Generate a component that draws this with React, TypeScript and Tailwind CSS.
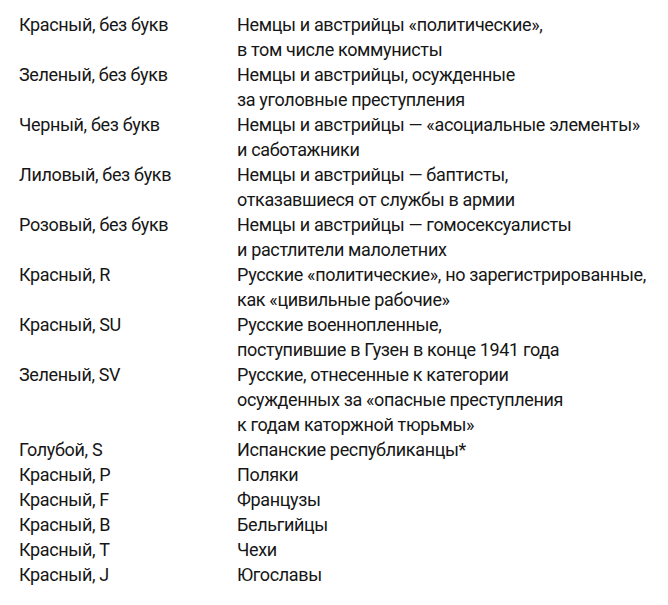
import React from "react";

const rows: [string, string[]][] = [
  ["Красный, без букв", ["Немцы и австрийцы «политические»,", "в том числе коммунисты"]],
  ["Зеленый, без букв", ["Немцы и австрийцы, осужденные", "за уголовные преступления"]],
  ["Черный, без букв", ["Немцы и австрийцы — «асоциальные элементы»", "и саботажники"]],
  ["Лиловый, без букв", ["Немцы и австрийцы — баптисты,", "отказавшиеся от службы в армии"]],
  ["Розовый, без букв", ["Немцы и австрийцы — гомосексуалисты", "и растлители малолетних"]],
  ["Красный, R", ["Русские «политические», но зарегистрированные,", "как «цивильные рабочие»"]],
  ["Красный, SU", ["Русские военнопленные,", "поступившие в Гузен в конце 1941 года"]],
  ["Зеленый, SV", ["Русские, отнесенные к категории", "осужденных за «опасные преступления", "к годам каторжной тюрьмы»"]],
  ["Голубой, S", ["Испанские республиканцы*"]],
  ["Красный, P", ["Поляки"]],
  ["Красный, F", ["Французы"]],
  ["Красный, B", ["Бельгийцы"]],
  ["Красный, T", ["Чехи"]],
  ["Красный, J", ["Югославы"]],
];

export default function App() {
  return (
    <div className="w-[668px] h-[605px] bg-white pt-[12px] pl-[19px] text-[#161616] text-[18px] leading-[25px] tracking-[-0.35px]" style={{ fontFamily: "Roboto, 'Liberation Sans', sans-serif" }}>
      <div className="grid grid-cols-[218px_1fr]">
        {rows.map(([l, r], i) => (
          <React.Fragment key={i}>
            <div>{l}</div>
            <div>
              {r.map((t, j) => (
                <div key={j}>{t}</div>
              ))}
            </div>
          </React.Fragment>
        ))}
      </div>
    </div>
  );
}
